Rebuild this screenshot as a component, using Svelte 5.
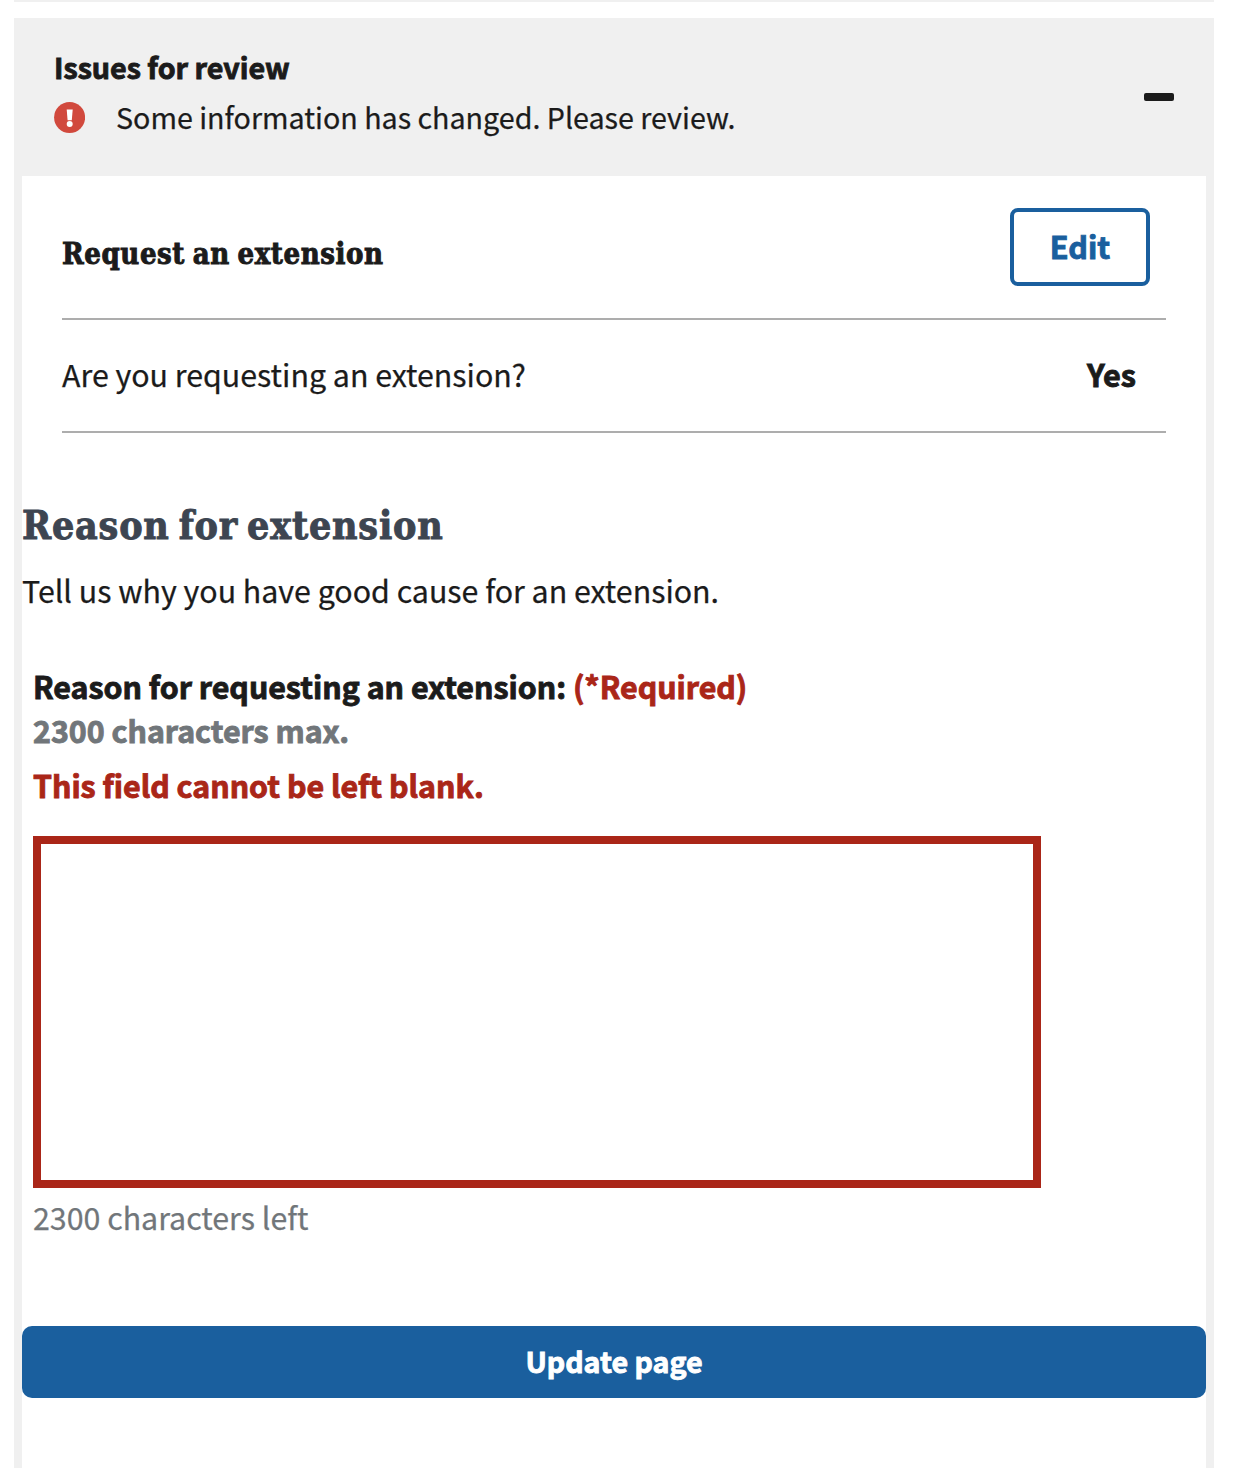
<script>
  let open = $state(true);
  let reason = $state('');
  const maxLength = 2300;
</script>

<main>
  <div class="previous"></div>
  <section class="accordion">
    <button class="header" aria-expanded={open} onclick={() => (open = !open)}>
      <span class="summary">
        <strong class="title">Issues for review</strong>
        <span class="alert">
          <svg width="31" height="31" viewBox="0 0 31 31" aria-hidden="true">
            <circle cx="15.6" cy="15.5" r="15.5" fill="#d1493d" />
            <path d="M12.7 7.6h6l-.9 10.7h-4.2z" fill="#fff" />
            <circle cx="15.7" cy="21.9" r="3" fill="#fff" />
          </svg>
          <span class="message">Some information has changed. Please review.</span>
        </span>
      </span>
      <span class="minus"></span>
    </button>

    {#if open}
      <div class="body">
        <div class="review">
          <div class="review-head">
            <h3>Request an extension</h3>
            <button class="edit">Edit</button>
          </div>
          <div class="review-row">
            <span class="question">Are you requesting an extension?</span>
            <strong>Yes</strong>
          </div>
        </div>

        <h2>Reason for extension</h2>
        <p class="intro">Tell us why you have good cause for an extension.</p>

        <div class="field">
          <label for="reason">Reason for requesting an extension: <span class="required">(*Required)</span></label>
          <div class="hint">2300 characters max.</div>
          <div class="error">This field cannot be left blank.</div>
          <textarea id="reason" maxlength={maxLength} bind:value={reason}></textarea>
          <div class="left">{maxLength - reason.length} characters left</div>
        </div>

        <button class="update">Update page</button>
      </div>
    {/if}
  </section>
</main>

<style>
  :global(body) {
    background: #fff;
    overflow: hidden;
  }
  main {
    box-sizing: border-box;
    height: 1468px;
    padding: 0 20px 0 14px;
    display: flex;
    flex-direction: column;
    gap: 16px;
    color: #1b1b1b;
    font-family: "Noto Sans CJK SC", "Noto Sans", sans-serif;
    font-size: 30.35px;
    line-height: 44px;
    white-space: nowrap;
    overflow: hidden;
    -webkit-text-stroke: 0.25px currentColor;
  }
  button {
    font: inherit;
    color: inherit;
    margin: 0;
    cursor: pointer;
  }
  strong,
  label,
  .hint,
  .error,
  .edit,
  .update {
    font-weight: 700;
    -webkit-text-stroke: 0.9px currentColor;
  }
  .previous {
    height: 2px;
    flex: none;
    background: #f0f0f0;
  }
  .accordion {
    flex: 1;
    display: flex;
    flex-direction: column;
    background: #f0f0f0;
  }
  .header {
    box-sizing: border-box;
    height: 158px;
    padding: 29px 40px 0;
    border: 0;
    background: none;
    display: flex;
    justify-content: space-between;
    align-items: flex-start;
    text-align: left;
  }
  .summary {
    display: flex;
    flex-direction: column;
    gap: 6px;
  }
  .title {
    font-size: 28.65px;
    line-height: 40px;
  }
  .alert {
    display: flex;
    align-items: flex-start;
    gap: 31px;
    font-size: 28.65px;
    line-height: 48px;
  }
  .alert svg {
    margin-top: 8.5px;
  }
  .minus {
    width: 30px;
    height: 8px;
    margin-top: 46px;
    border-radius: 2px;
    background: #1b1b1b;
  }
  .body {
    flex: 1;
    margin: 0 8px;
    background: #fff;
  }
  .review {
    padding: 0 40px;
  }
  .review-head {
    box-sizing: border-box;
    height: 144px;
    padding: 32px 16px 0 0;
    border-bottom: 2px solid #adadad;
    display: flex;
    justify-content: space-between;
    align-items: flex-start;
  }
  h2,
  h3 {
    margin: 0;
    font-family: "DejaVu Serif Condensed", "DejaVu Serif", serif;
    font-stretch: condensed;
    font-weight: 700;
    -webkit-text-stroke: 0.9px currentColor;
  }
  h3 {
    margin-top: 24px;
    font-size: 29px;
    letter-spacing: 0.6px;
    word-spacing: -2px;
  }
  .edit {
    box-sizing: border-box;
    width: 140px;
    height: 78px;
    border: 4px solid #1a5f9e;
    border-radius: 8px;
    padding: 0 0 2px;
    background: #fff;
    color: #1a5f9e;
    font-size: 30.6px;
  }
  .review-row {
    box-sizing: border-box;
    height: 113px;
    padding: 32px 30px 0 0;
    border-bottom: 2px solid #adadad;
    display: flex;
    justify-content: space-between;
  }
  .review-row strong {
    font-size: 30.6px;
  }
  h2 {
    margin-top: 67px;
    font-size: 39px;
    line-height: 50px;
    letter-spacing: 0.8px;
    word-spacing: -4px;
    color: #3d4551;
  }
  .intro {
    margin: 18px 0 0;
  }
  .field {
    margin: 52px 0 0 11px;
    display: flex;
    flex-direction: column;
    align-items: flex-start;
  }
  .hint,
  .left {
    color: #71767a;
  }
  .required,
  .error {
    color: #aa2618;
  }
  .error {
    margin-top: 11px;
  }
  textarea {
    box-sizing: border-box;
    width: 1008px;
    height: 352px;
    margin: 29px 0 0;
    padding: 16px;
    border: 8px solid #aa2618;
    border-radius: 0;
    outline: 0;
    background: #fff;
    font: inherit;
    resize: none;
  }
  .left {
    margin-top: 7px;
  }
  .update {
    display: block;
    width: 100%;
    height: 72px;
    margin-top: 87px;
    padding: 0 0 2px;
    border: 0;
    border-radius: 10px;
    background: #1a5f9e;
    color: #fff;
    font-size: 28.6px;
  }
</style>
